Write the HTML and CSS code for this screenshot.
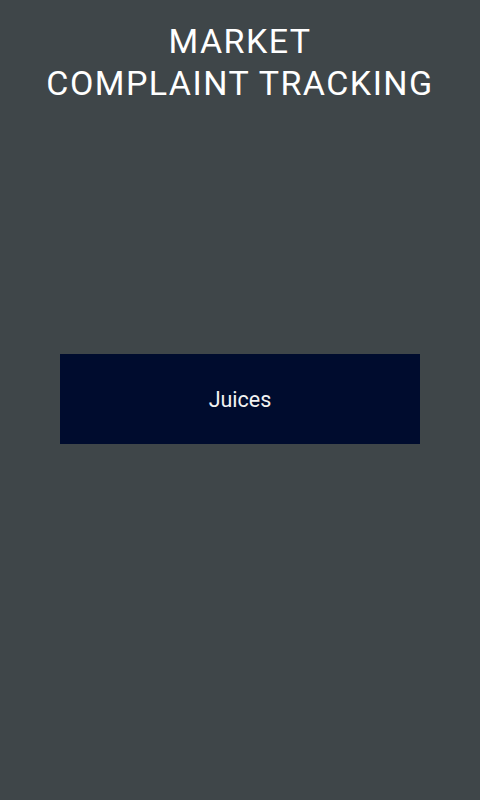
FILE: index.html
```html
<!DOCTYPE html>
<html>
<head>
<meta charset="utf-8">
<link rel="stylesheet" href="styles.css">
</head>
<body>
<div class="screen">
  <h1 class="title">MARKET<br>COMPLAINT TRACKING</h1>
  <div class="category">Juices</div>
</div>
</body>
</html>
```
FILE: styles.css
```css
html, body {
  margin: 0;
  padding: 0;
  background: #3f4649;
}
.screen {
  width: 480px;
  height: 800px;
  display: flex;
  flex-direction: column;
  align-items: center;
  padding-top: 20px;
  box-sizing: border-box;
  font-family: Roboto, "Liberation Sans", sans-serif;
  color: #ffffff;
}
.title {
  margin: 0;
  font-size: 34px;
  line-height: 42px;
  font-weight: 400;
  letter-spacing: 1.45px;
  text-align: center;
}
.category {
  margin-top: 250px;
  width: 360px;
  height: 90px;
  background: #000c2e;
  display: flex;
  align-items: center;
  justify-content: center;
  font-size: 21.5px;
  color: #f2f2f2;
}
```
